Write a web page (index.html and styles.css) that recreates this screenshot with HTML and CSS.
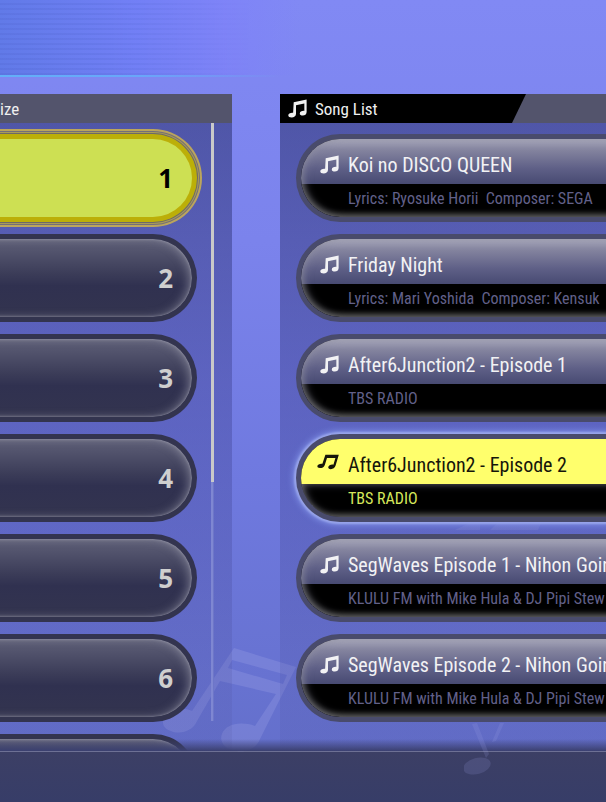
FILE: index.html
```
<!DOCTYPE html>
<html lang="en">
<head>
  <meta charset="UTF-8" />
  <title>Song List</title>
  <link rel="stylesheet" href="styles.css">
</head>
<body>
  <!-- shared note icons -->
  <svg class="defs" width="0" height="0" aria-hidden="true">
    <symbol id="note" viewBox="0 0 20 20">
      <path d="M6 3.5 19.6 .6V13.8C19.6 16.4 17.8 17.4 15.6 17.4 13.6 17.4 12.4 16.6 12.4 15.2 12.4 13.6 14.4 12.3 17.2 12.5V4.8L8.4 6.7V15.8C8.4 18.3 6.2 19.4 3.9 19.4 1.7 19.4 .3 18.6 .3 17.1 .3 15.4 2.6 14.2 5.4 14.5Z" />
    </symbol>
    <symbol id="note-tilt" viewBox="0 0 22 16">
      <path d="M8.4 .8H21.8L18.6 11.6C17.9 13.8 15.9 15.2 13.8 15.2 12 15.2 11 14.2 11.3 13 11.7 11.4 13.9 10.3 16.4 10.7L18.4 4H10L7.8 10.9C7 13.1 5 14 3 14 1.2 14 .1 13.2 .4 12 .8 10.4 3 9.4 5.4 9.8Z" />
    </symbol>
  </svg>

  <svg class="deco deco-left" viewBox="0 0 140 110" aria-hidden="true">
    <path d="M72 2 134 21 98 93C94 103 84 106 75 105 63 104 57 96 60 88 64 78 78 75 93 80L114 48 58 35 35 75C31 85 18 89 9 85 0 82-1 75 4 69 10 62 22 61 30 65ZM70 14 66 22 121 38 125 29Z" fill-rule="evenodd" />
  </svg>
  <svg class="deco deco-mid" viewBox="0 0 110 20" aria-hidden="true">
    <path d="M15 14 40 2V14ZM50 14 62 3 104 0 98 14Z" />
  </svg>
  <svg class="deco deco-right" viewBox="0 0 50 60" aria-hidden="true">
    <path d="M8 2 13 1 25 32 22 36ZM36 1 40 1 32 19 28 20Z" />
    <ellipse cx="13" cy="44" rx="14" ry="8" transform="rotate(-15 13 44)" />
  </svg>

  <header class="banner"></header>

  <main class="columns">
    <section class="panel sizes">
      <h2 class="panel-title">ize</h2>
      <div class="panel-body">
        <div class="size-list">
          <button class="size active">1</button>
          <button class="size">2</button>
          <button class="size">3</button>
          <button class="size">4</button>
          <button class="size">5</button>
          <button class="size">6</button>
          <button class="size" aria-label="More"></button>
        </div>
        <div class="track"><div class="thumb"></div></div>
      </div>
    </section>

    <section class="panel songs">
      <h2 class="panel-title">
        <span class="tab"><svg class="icon"><use href="#note" /></svg>Song List</span>
      </h2>
      <div class="song-list">
        <button class="song">
          <span class="name"><svg class="icon"><use href="#note" /></svg>Koi no DISCO QUEEN</span>
          <span class="info">Lyrics: Ryosuke Horii&nbsp; Composer: SEGA</span>
        </button>
        <button class="song">
          <span class="name"><svg class="icon"><use href="#note" /></svg>Friday Night</span>
          <span class="info">Lyrics: Mari Yoshida&nbsp; Composer: Kensuk</span>
        </button>
        <button class="song">
          <span class="name"><svg class="icon"><use href="#note" /></svg>After6Junction2 - Episode 1</span>
          <span class="info">TBS RADIO</span>
        </button>
        <button class="song active">
          <span class="name"><svg class="icon"><use href="#note-tilt" /></svg>After6Junction2 - Episode 2</span>
          <span class="info">TBS RADIO</span>
        </button>
        <button class="song">
          <span class="name"><svg class="icon"><use href="#note" /></svg>SegWaves Episode 1 - Nihon Goin</span>
          <span class="info">KLULU FM with Mike Hula &amp; DJ Pipi Stew</span>
        </button>
        <button class="song">
          <span class="name"><svg class="icon"><use href="#note" /></svg>SegWaves Episode 2 - Nihon Goin</span>
          <span class="info">KLULU FM with Mike Hula &amp; DJ Pipi Stew</span>
        </button>
      </div>
    </section>
  </main>

  <footer class="bottom-bar"></footer>
</body>
</html>
```

FILE: styles.css
```
:root {
  --frame: #494b6c;
  --frame-dark: #33344f;
  --title: #53546c;
  --yellow: #ffff6c;
  --lime: #cde053;
  --gold: #bcaf08;
}

* {
  box-sizing: border-box;
}

body {
  margin: 0;
  height: 100vh;
  display: flex;
  flex-direction: column;
  overflow: hidden;
  position: relative;
  font-family: 'Roboto Condensed', 'Liberation Sans Narrow', sans-serif;
  background: linear-gradient(#8189f4 0%, #7b83ec 30%, #6f79df 60%, #626ec8 100%);
}

button {
  padding: 0;
  font-family: inherit;
  text-align: left;
  cursor: pointer;
}

.defs {
  position: absolute;
}

/* faint notes behind the lists */
.deco {
  position: absolute;
  fill: #a0a5e8;
  opacity: 0.28;
}

.deco-left {
  left: 162px;
  bottom: 46px;
  width: 140px;
}

.deco-mid {
  left: 440px;
  bottom: 266px;
  width: 110px;
}

.deco-right {
  left: 464px;
  bottom: 20px;
  width: 50px;
  z-index: 1;
  opacity: 0.16;
}

.banner {
  flex: none;
  height: 77px;
  margin-bottom: 17px;
  background:
    linear-gradient(90deg, #62b0f8, #69a6f9 50%, transparent) 0 100% / 280px 2px no-repeat,
    linear-gradient(90deg, #617ae8, rgba(110, 125, 246, 0.8) 45%, rgba(125, 128, 250, 0.6) 75%, rgba(129, 137, 244, 0)) 0 0 / 300px 75px no-repeat;
}

/* scanlines */
.banner::before {
  content: "";
  display: block;
  width: 250px;
  height: 75px;
  background: repeating-linear-gradient(transparent 0 3px, rgba(70, 90, 190, 0.14) 3px 5px);
  mask-image: linear-gradient(90deg, #000 40%, transparent);
}

.columns {
  flex: 1;
  min-height: 0;
  display: grid;
  grid-template-columns: 232px 1fr;
  gap: 48px;
  overflow: hidden;
  position: relative;
}

/* shade above the bottom bar */
.columns::after {
  content: "";
  position: absolute;
  left: 0;
  right: 0;
  bottom: 0;
  height: 12px;
  background: linear-gradient(transparent, #3b4070);
}

.panel {
  min-width: 0;
  background: linear-gradient(rgba(10, 15, 60, 0.42), rgba(40, 40, 110, 0.3) 40%, rgba(70, 70, 140, 0.15) 80%, rgba(70, 70, 140, 0.05));
}

.panel-title {
  margin: 0;
  height: 29px;
  line-height: 30px;
  font-size: 17px;
  font-weight: normal;
  color: #f0f0f0;
  background: var(--title);
}

.tab {
  display: flex;
  align-items: center;
  gap: 8px;
  width: 246px;
  height: 29px;
  padding-left: 8px;
  background: #000;
  clip-path: polygon(0 0, 100% 0, calc(100% - 14px) 100%, 0 100%);
}

.icon {
  flex: none;
  width: 19px;
  height: 19px;
  fill: currentColor;
}

.panel-body {
  display: flex;
  gap: 14px;
}

.size-list {
  width: 197px;
  padding-top: 11px;
  display: flex;
  flex-direction: column;
  gap: 12px;
}

/* rows run in from beyond the left edge */
.size {
  flex: none;
  height: 88px;
  margin-left: -20px;
  padding-right: 19px;
  border: 5px solid var(--frame-dark);
  border-left: none;
  border-radius: 0 44px 44px 0;
  text-align: right;
  font: bold 26px 'Noto Sans', sans-serif;
  color: #cfcfcf;
  background: linear-gradient(#5f6078, #3b3c58 45%, #303150 60%, #33344f);
  box-shadow: inset -4px 0 10px -1px rgba(175, 175, 190, 0.5), inset 0 0 3px rgba(190, 190, 200, 0.6);
}

.size.active {
  color: #000;
  background: var(--lime);
  border-color: var(--gold);
  box-shadow: 0 0 0 1px #6d6968, 0 0 0 2px #a99b58, 0 0 0 3px #736f78, 0 0 0 5px #bba55c;
}

.track {
  width: 3px;
  height: 598px;
  background: linear-gradient(90deg, #7f87d2 2px, #6d76c8 2px);
}

.thumb {
  height: 60%;
  background: #c9c9c9;
}

.song-list {
  display: flex;
  flex-direction: column;
  gap: 12px;
  padding: 11px 0 0 16px;
}

.song {
  flex: none;
  height: 88px;
  display: flex;
  flex-direction: column;
  overflow: hidden;
  position: relative;
  border: 5px solid var(--frame);
  border-right: none;
  border-radius: 44px 0 0 44px;
  white-space: nowrap;
  background: #000;
}

/* glassy rim over both halves */
.song::after {
  content: "";
  position: absolute;
  inset: 0 -20px 0 0;
  border-radius: 39px 0 0 39px;
  box-shadow: inset 3px 0 9px rgba(150, 150, 175, 0.5), inset 0 -2px 6px rgba(140, 140, 125, 0.6);
}

.name {
  flex: none;
  align-self: stretch;
  height: 45px;
  display: flex;
  align-items: center;
  gap: 9px;
  padding: 6px 0 0 19px;
  font-size: 20px;
  color: #f2f2f4;
  background: linear-gradient(#a9a9bc, #83839e 25%, #5f6087 65%, #474a72);
}

.info {
  padding-left: 47px;
  line-height: 29px;
  font-size: 16px;
  color: #62608a;
}

.song.active {
  box-shadow: 0 0 2px 2px #98a4ea, 0 0 6px 3px #7f90e6;
}

.song.active .name {
  color: #15150a;
  background: var(--yellow);
}

.song.active .info {
  color: #d6e85c;
}

.song.active::after {
  top: 45px;
  border-radius: 0 0 0 39px;
}

.song.active .icon {
  width: 22px;
  height: 16px;
  margin: 0 0 6px -3px;
}

.bottom-bar {
  flex: none;
  height: 51px;
  border-top: 1px solid #6d7094;
  background: linear-gradient(#3c3f65, #373d68);
}
```
